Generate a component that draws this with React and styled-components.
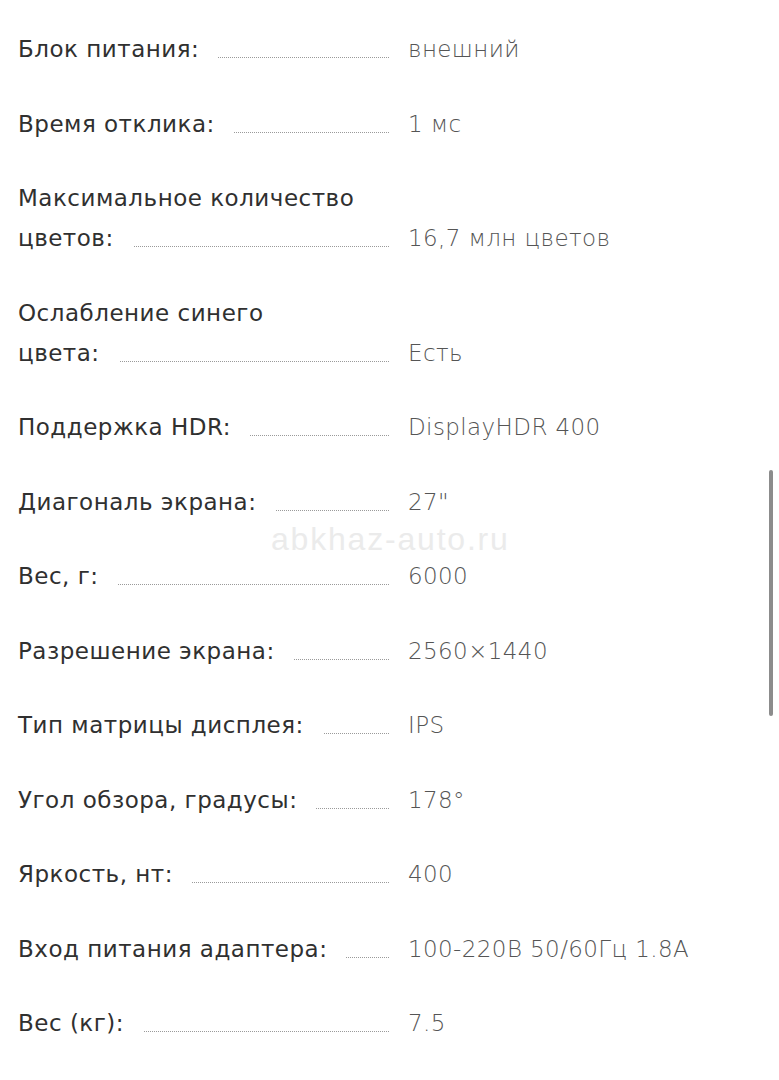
import styled, { createGlobalStyle } from 'styled-components'

const Global = createGlobalStyle`
html, body {
  margin:0;
  padding:0;
  background:#fff;
}
body {
  width:779px;
  height:1080px;
  overflow:hidden;
}
`

const Page = styled.div`
position:relative;
width:779px;
height:1080px;
background:#fff;
`

const List = styled.dl`
margin:0;
padding:29px 0 0 18px;
display:flex;
flex-direction:column;
gap:34.5px;
`

const Row = styled.div`
display:grid;
grid-template-columns:372px 1fr;
column-gap:18px;
align-items:end;
`

const Label = styled.dt`
margin:0;
font-family:'DejaVu Sans', sans-serif;
font-size:23px;
letter-spacing:0.5px;
line-height:40px;
color:#303030;
white-space:pre-line;
background-image:linear-gradient(to right, #9a9a9a 1px, transparent 1px);
background-size:2px 1px;
background-repeat:repeat-x;
background-position:left bottom 11px;
`

const LabelText = styled.span`
background:#fff;
padding-right:19px;
`

const Value = styled.dd`
margin:0;
font-family:'DejaVu Sans', sans-serif;
font-weight:200;
font-size:23px;
letter-spacing:0.4px;
line-height:40px;
color:#555;
`

const Watermark = styled.div`
position:absolute;
left:271px;
top:521px;
font-family:'Liberation Sans', Arial, sans-serif;
font-size:32px;
letter-spacing:1.8px;
color:#ebebeb;
pointer-events:none;
`

const Scrollbar = styled.div`
position:absolute;
right:6px;
top:470px;
width:4px;
height:246px;
border-radius:2px;
background:#8c8c8c;
`

const specs = [
  ['Блок питания:', 'внешний'],
  ['Время отклика:', '1 мс'],
  ['Максимальное количество\nцветов:', '16,7 млн цветов'],
  ['Ослабление синего\nцвета:', 'Есть'],
  ['Поддержка HDR:', 'DisplayHDR 400'],
  ['Диагональ экрана:', '27"'],
  ['Вес, г:', '6000'],
  ['Разрешение экрана:', '2560×1440'],
  ['Тип матрицы дисплея:', 'IPS'],
  ['Угол обзора, градусы:', '178°'],
  ['Яркость, нт:', '400'],
  ['Вход питания адаптера:', '100-220В 50/60Гц 1.8А'],
  ['Вес (кг):', '7.5'],
]

export default function App(){
    return (
        <Page>
            <Global/>
            <List>
                {specs.map(([k, v]) => (
                    <Row key={k}>
                        <Label><LabelText>{k}</LabelText></Label>
                        <Value>{v}</Value>
                    </Row>
                ))}
            </List>
            <Watermark>abkhaz-auto.ru</Watermark>
            <Scrollbar/>
        </Page>
    )
}
